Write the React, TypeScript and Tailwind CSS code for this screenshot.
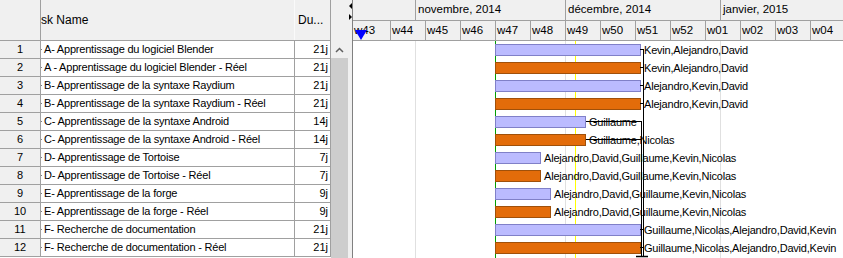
import React from "react";

interface Task {
    name: string;
    dur: string;
    end: number; // bar right edge, px from gantt left
    res: string;
    real: boolean;
}

const tasks: Task[] = [
    { name: "A- Apprentissage du logiciel Blender", dur: "21j", end: 288, res: "Kevin,Alejandro,David", real: false },
    { name: "A - Apprentissage du logiciel Blender - Réel", dur: "21j", end: 288, res: "Kevin,Alejandro,David", real: true },
    { name: "B- Apprentissage de la syntaxe Raydium", dur: "21j", end: 288, res: "Alejandro,Kevin,David", real: false },
    { name: "B- Apprentissage de la syntaxe Raydium - Réel", dur: "21j", end: 288, res: "Alejandro,Kevin,David", real: true },
    { name: "C- Apprentissage de la syntaxe Android", dur: "14j", end: 233, res: "Guillaume", real: false },
    { name: "C- Apprentissage de la syntaxe Android - Réel", dur: "14j", end: 233, res: "Guillaume,Nicolas", real: true },
    { name: "D- Apprentissage de Tortoise", dur: "7j", end: 188, res: "Alejandro,David,Guillaume,Kevin,Nicolas", real: false },
    { name: "D- Apprentissage de Tortoise - Réel", dur: "7j", end: 188, res: "Alejandro,David,Guillaume,Kevin,Nicolas", real: true },
    { name: "E- Apprentissage de la forge", dur: "9j", end: 198, res: "Alejandro,David,Guillaume,Kevin,Nicolas", real: false },
    { name: "E- Apprentissage de la forge - Réel", dur: "9j", end: 198, res: "Alejandro,David,Guillaume,Kevin,Nicolas", real: true },
    { name: "F- Recherche de documentation", dur: "21j", end: 288, res: "Guillaume,Nicolas,Alejandro,David,Kevin", real: false },
    { name: "F- Recherche de documentation - Réel", dur: "21j", end: 288, res: "Guillaume,Nicolas,Alejandro,David,Kevin", real: true },
];

const weeks = ["w44", "w45", "w46", "w47", "w48", "w49", "w50", "w51", "w52", "w01", "w02", "w03", "w04"];

const BAR_START = 142;

export default function App() {
    return (
        <div className="flex h-[258px] w-[843px] overflow-hidden bg-white font-['Liberation_Sans',Arial,sans-serif] text-[11px] text-black">

            {/* task table */}
            <div className="flex w-[331px] shrink-0 flex-col">
                <div className="flex h-[41px] shrink-0 border-b border-[#a0a0a0] bg-[#f0f0f0] text-[12px]">
                    <div className="w-[41px] shrink-0 border-r border-[#a0a0a0]" />
                    <div className="flex w-[254px] shrink-0 items-center overflow-hidden border-r border-[#fafafa]">
                        <span className="whitespace-nowrap">sk Name</span>
                    </div>
                    <div className="flex w-[36px] shrink-0 items-center border-r border-[#a0a0a0] pl-[3px]">Du...</div>
                </div>
                {tasks.map((t, i) => (
                    <div key={i} className="flex h-[18px] shrink-0 border-b border-[#a0a0a0]">
                        <div className="flex w-[41px] shrink-0 items-center justify-center border-r border-[#a0a0a0] bg-[#f0f0f0]">{i + 1}</div>
                        <div className="flex w-[254px] shrink-0 items-center overflow-hidden whitespace-nowrap border-r border-[#a0a0a0] tracking-[-0.2px]">
                            <span className="mr-[1px] h-px w-[1px] bg-[#808080]" />
                            <span className="pl-[1px]">{t.name}</span>
                        </div>
                        <div className="flex w-[36px] shrink-0 items-center justify-end border-r border-[#a0a0a0] pr-[2px]">{t.dur}</div>
                    </div>
                ))}
            </div>

            {/* scrollbar */}
            <div className="flex w-[17px] shrink-0 flex-col bg-[#f0f0f0]">
                <div className="h-[41px] shrink-0" />
                <div className="flex h-[17px] shrink-0 items-center justify-center">
                    <svg width="9" height="6" viewBox="0 0 9 6">
                        <polyline points="1,5 4.5,1.5 8,5" fill="none" stroke="#606060" strokeWidth="1.5" />
                    </svg>
                </div>
                <div className="flex-1 bg-[#cdcdcd]" />
            </div>

            {/* splitter */}
            <div className="flex w-[5px] shrink-0 flex-col items-center border-r border-[#808080] bg-[#f0f0f0] pt-[3px]">
                <div className="h-0 w-0 border-y-[3px] border-r-[3px] border-y-transparent border-r-black" />
                <div className="mt-[5px] h-0 w-0 border-y-[3px] border-l-[3px] border-y-transparent border-l-black" />
            </div>

            {/* gantt */}
            <div className="relative flex flex-1 flex-col">
                <div className="flex h-[21px] shrink-0 border-b border-[#a0a0a0] bg-[#f0f0f0] text-[11.5px]">
                    <div className="w-[63px] shrink-0 border-r border-[#a0a0a0]" />
                    <div className="flex w-[150px] shrink-0 items-center border-r border-[#a0a0a0] pl-[2px]">novembre, 2014</div>
                    <div className="flex w-[155px] shrink-0 items-center border-r border-[#a0a0a0] pl-[2px]">décembre, 2014</div>
                    <div className="flex flex-1 items-center pl-[2px]">janvier, 2015</div>
                </div>
                <div className="flex h-[20px] shrink-0 border-b border-[#a0a0a0] bg-[#f0f0f0] text-[11.5px]">
                    <div className="flex w-[38px] shrink-0 items-center border-r border-[#a0a0a0] pl-[1px]">w43</div>
                    {weeks.map((w) => (
                        <div key={w} className="flex w-[35px] shrink-0 items-center border-r border-[#a0a0a0] pl-[1px]">{w}</div>
                    ))}
                </div>

                {/* today marker */}
                <svg className="absolute left-[2px] top-[30px]" width="12" height="10" viewBox="0 0 12 10">
                    <polygon points="0,0 12,0 6,10" fill="#0000ff" />
                </svg>

                <div className="relative flex-1">
                    <div className="absolute bottom-0 left-[62px] top-0 w-px bg-[#e0e0e0]" />
                    <div className="absolute bottom-0 left-[212px] top-0 w-px bg-[#e0e0e0]" />
                    <div className="absolute bottom-0 left-[367px] top-0 w-px bg-[#e0e0e0]" />
                    <div className="absolute bottom-0 left-[222px] top-0 w-px bg-[#ffff00]" />
                    <div className="absolute bottom-0 left-[142px] top-0 w-px bg-[#00a000]" />

                    <div className="flex flex-col">
                        {tasks.map((t, i) => (
                            <div key={i} className="relative h-[18px] shrink-0">
                                <div
                                    className={`absolute top-[3px] h-[12px] border ${t.real ? "border-[#a0500a] bg-[#e36c0a]" : "border-[#8080c8] bg-[#bbbbff]"}`}
                                    style={{ left: BAR_START, width: t.end - BAR_START }}
                                />
                                <span className="absolute top-0 flex h-[18px] items-center whitespace-nowrap tracking-[-0.2px]" style={{ left: t.end + 3 }}>
                                    {t.res}
                                </span>
                            </div>
                        ))}
                    </div>

                    {/* dependency lines */}
                    <svg className="absolute left-0 top-0" width="490" height="217">
                        <line x1="290.5" y1="8" x2="290.5" y2="216" stroke="black" strokeWidth="1" />
                        <line x1="288.5" y1="80.5" x2="288.5" y2="216" stroke="black" strokeWidth="1" />
                        <line x1="233" y1="80.5" x2="289" y2="80.5" stroke="black" strokeWidth="1" />
                        <line x1="233" y1="98.5" x2="289" y2="98.5" stroke="black" strokeWidth="1" />
                        {[0, 1, 2, 3, 10, 11].map((r) => (
                            <line key={r} x1="287" y1={8.5 + r * 18} x2="291" y2={8.5 + r * 18} stroke="black" strokeWidth="1" />
                        ))}
                        <line x1="283" y1="215.5" x2="295" y2="215.5" stroke="black" strokeWidth="1.5" />
                    </svg>
                </div>
            </div>

        </div>
    );
}
